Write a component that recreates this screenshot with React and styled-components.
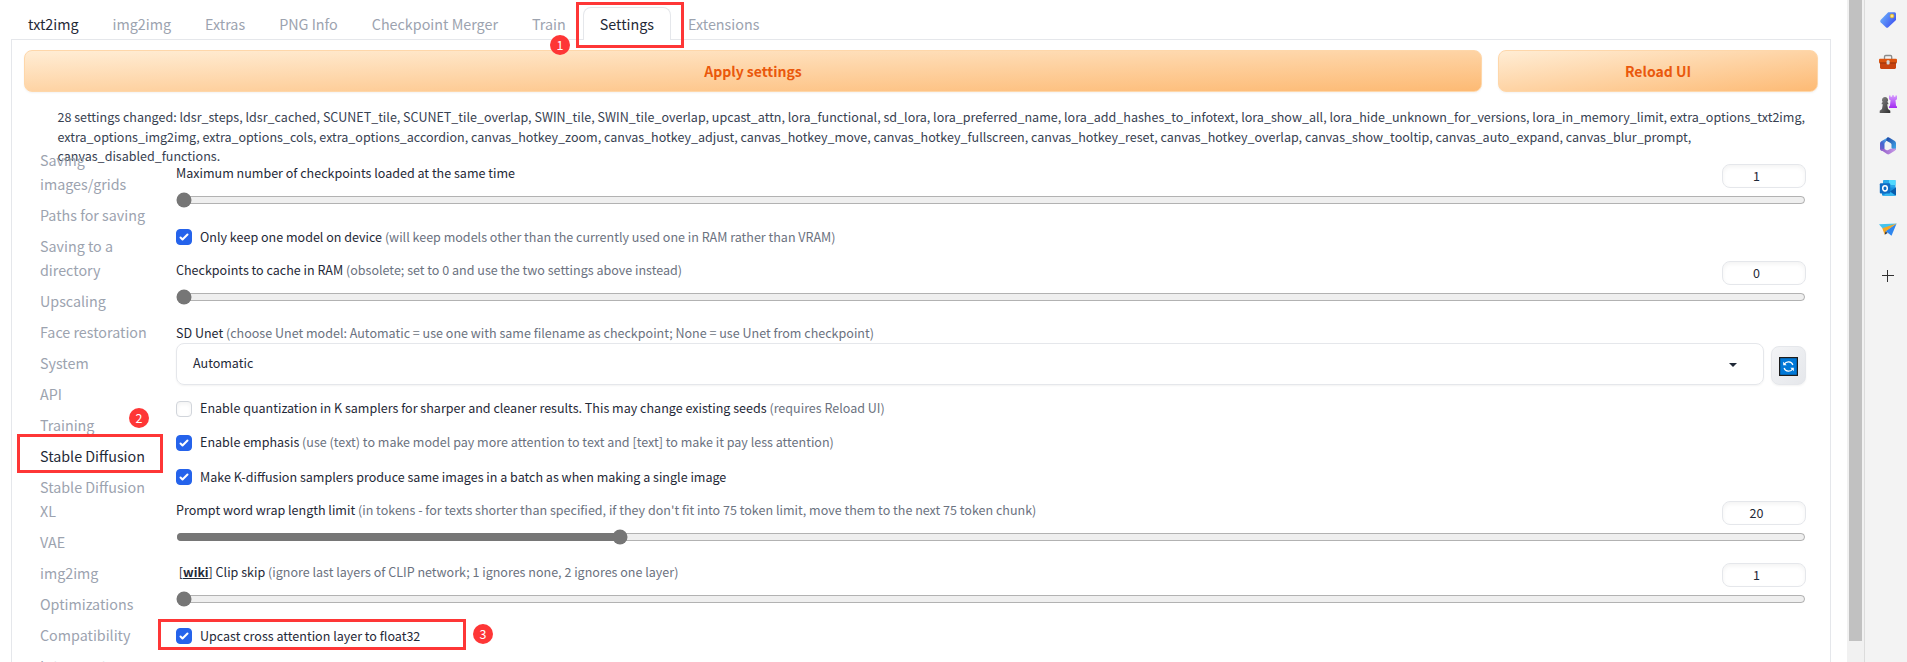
import React from "react";
import styled, { createGlobalStyle, css } from "styled-components";

const GlobalStyle = createGlobalStyle`
  * { box-sizing: border-box; }
  body {
    margin: 0;
    background: #fff;
    color: #1f2937;
    font-family: "Noto Sans CJK SC", "Noto Sans", sans-serif;
    overflow: hidden;
  }
`;

const Page = styled.div`
  position: relative;
  display: flex;
  height: 662px;
  width: 1907px;
  overflow: hidden;
`;

const Content = styled.main`
  flex: 1;
  padding: 7px 16px 0 11px;
  overflow: hidden;
`;

const TabBar = styled.nav`
  display: flex;
  height: 33px;
  margin-bottom: -1px;
  position: relative;
`;

const Tab = styled.div`
  height: 33px;
  padding: 4px 16px 0;
  border: 1px solid transparent;
  border-bottom: 0;
  border-radius: 8px 8px 0 0;
  font-size: 14.33px;
  line-height: 24px;
  white-space: nowrap;
  color: ${(p) => (p.$dark ? "#1f2937" : "#9ca3af")};
  ${(p) =>
    p.$selected &&
    css`
      background: #fff;
      border-color: #e5e7eb;
    `}
`;

const Panel = styled.section`
  height: 700px;
  padding: 10px 12px 0;
  border: 1px solid #e5e7eb;
`;

const Actions = styled.div`
  display: grid;
  grid-template-columns: 1fr 320px;
  gap: 16px;
`;

const PrimaryButton = styled.button`
  height: 42px;
  padding: 0 0 1px;
  border: 1px solid #fed7aa;
  border-radius: 8px;
  background: linear-gradient(to bottom right, #ffedd5, #fdba74);
  box-shadow: 0 1px 2px rgba(0, 0, 0, 0.05);
  color: #ea580c;
  font: 600 14px/24px "Noto Sans CJK SC", sans-serif;
`;

const Changes = styled.div`
  height: 41px;
  margin: 15px 0 0 33.5px;
  font-size: 12.54px;
  line-height: 19.5px;
  color: #374151;
  white-space: nowrap;
`;

const Columns = styled.div`
  display: grid;
  grid-template-columns: 152px 1630px;
`;

const SectionNav = styled.nav`
  display: flex;
  flex-direction: column;
  gap: 7px;
  width: 130px;
  padding-left: 16px;
`;

const SectionLink = styled.div`
  font-size: 14.3px;
  line-height: 24px;
  color: ${(p) => (p.$active ? "#1f2937" : "#9ca3af")};
`;

const Options = styled.div`
  padding-top: 16px;
  font-size: 12.54px;
`;

const Muted = styled.span`
  color: #6b7280;
`;

const SliderBlock = styled.div`
  margin-top: ${(p) => p.$gap || 0}px;
`;

const SliderHead = styled.div`
  display: flex;
  justify-content: space-between;
  height: 24px;
  line-height: 18px;
  white-space: pre;
`;

const NumberBox = styled.div`
  width: 84px;
  height: 24px;
  padding-right: 15px;
  border: 1px solid #e5e7eb;
  border-radius: 8px;
  box-shadow: inset 0 2px 4px rgba(0, 0, 0, 0.05);
  text-align: center;
  line-height: 21px;
`;

const Range = styled.input`
  display: block;
  width: 1630px;
  height: 16px;
  margin: 4px 0 0;
  accent-color: #767676;
`;

const CheckRow = styled.label`
  display: flex;
  align-items: center;
  gap: 8px;
  height: 16px;
  margin-top: ${(p) => p.$gap}px;
  line-height: 16px;
  white-space: nowrap;
`;

const CheckText = styled.span`
  margin-bottom: ${(p) => (p.$raised ? 2 : 0)}px;
`;

const CheckBox = styled.span`
  display: flex;
  width: 16px;
  height: 16px;
  border: 1px solid ${(p) => (p.$on ? "#2563eb" : "#d1d5db")};
  border-radius: 4px;
  background: ${(p) => (p.$on ? "#2563eb" : "#fff")};
  box-shadow: ${(p) => (p.$on ? "none" : "inset 0 2px 4px rgba(0,0,0,.05)")};
  svg { margin: -1px; }
`;

const SelectLabel = styled.div`
  margin-top: 18px;
  height: 20px;
  line-height: 20px;
`;

const SelectRow = styled.div`
  display: flex;
  align-items: flex-end;
  gap: 7px;
  height: 42px;
`;

const Select = styled.div`
  display: flex;
  align-items: center;
  justify-content: space-between;
  width: 1588px;
  height: 42px;
  padding: 0 26px 4px 16px;
  border: 1px solid #e5e7eb;
  border-radius: 8px;
  box-shadow: 0 1px 2px rgba(0, 0, 0, 0.05);
  svg { margin-top: 5px; }
`;

const IconButton = styled.button`
  display: flex;
  align-items: center;
  justify-content: center;
  width: 35px;
  height: 39px;
  padding: 1px 0 0;
  border: 1px solid #e5e7eb;
  border-radius: 8px;
  background: linear-gradient(to bottom right, #f3f4f6, #e5e7eb);
  box-shadow: 0 1px 2px rgba(0, 0, 0, 0.05);
`;

const WikiLink = styled.a`
  font-weight: 600;
  font-size: 12.3px;
  text-decoration: underline;
`;

const ScrollTrack = styled.div`
  width: 17px;
  padding: 0 2px;
  background: #f1f1f1;
`;

const ScrollThumb = styled.div`
  height: 641px;
  background: #c1c1c1;
`;

const EdgeBar = styled.aside`
  display: flex;
  flex-direction: column;
  align-items: center;
  gap: 22px;
  width: 43px;
  padding: 10px 0 0 4px;
  border-left: 1px solid #dcdcdc;
  background: #f3f3f3;
  svg:last-child { margin-top: 3px; }
`;

const Highlight = styled.div`
  position: absolute;
  left: ${(p) => p.$x}px;
  top: ${(p) => p.$y}px;
  width: ${(p) => p.$w}px;
  height: ${(p) => p.$h}px;
  border: 3px solid #fe3636;
`;

const Step = styled.div`
  position: absolute;
  left: ${(p) => p.$x}px;
  top: ${(p) => p.$y}px;
  width: 20px;
  height: 20px;
  border-radius: 50%;
  background: #fe3636;
  color: #fff;
  font-size: 12.5px;
  line-height: 19px;
  text-align: center;
`;

const tabs = ["txt2img", "img2img", "Extras", "PNG Info", "Checkpoint Merger", "Train", "Settings", "Extensions"];

const sections = [
  "Saving images/grids", "Paths for saving", "Saving to a directory", "Upscaling",
  "Face restoration", "System", "API", "Training", "Stable Diffusion",
  "Stable Diffusion XL", "VAE", "img2img", "Optimizations", "Compatibility",
  "Interrogate",
];

function Slider({ label, hint, value, min = 0, max = 10, gap }) {
  return (
    <SliderBlock $gap={gap}>
      <SliderHead>
        <span>{label}{hint && <Muted> {hint}</Muted>}</span>
        <NumberBox>{value}</NumberBox>
      </SliderHead>
      <Range type="range" min={min} max={max} defaultValue={value} />
    </SliderBlock>
  );
}

function Check({ on, raised, label, hint, gap }) {
  return (
    <CheckRow $gap={gap}>
      <CheckBox $on={on}>
        {on && (
          <svg width="16" height="16" viewBox="0 0 16 16" fill="#fff">
            <path d="M12.207 4.793a1 1 0 010 1.414l-5 5a1 1 0 01-1.414 0l-2-2a1 1 0 011.414-1.414L6.5 9.086l4.293-4.293a1 1 0 011.414 0z" />
          </svg>
        )}
      </CheckBox>
      <CheckText $raised={raised}>{label}{hint && <Muted> {hint}</Muted>}</CheckText>
    </CheckRow>
  );
}

const TagIcon = () => (
  <svg width="20" height="20" viewBox="0 0 20 20">
    <defs>
      <linearGradient id="tag" x1="0" y1="0.2" x2="1" y2="0.8">
        <stop offset="0" stopColor="#6cb2fb" /><stop offset="1" stopColor="#3a4cf0" />
      </linearGradient>
    </defs>
    <path d="M10.2 2.2h6.3q1.5 0 1.5 1.5v6.2L10.3 17.3q-1.2 1.1-2.4 0L2.6 12.2q-1-1.1 0-2.3z" fill="url(#tag)" />
    <circle cx="14" cy="6" r="2" fill="#ffd84a" stroke="#d8a92b" strokeWidth="0.6" />
    <circle cx="14" cy="6" r="0.8" fill="#fff4c4" />
  </svg>
);

const ToolboxIcon = () => (
  <svg width="20" height="20" viewBox="0 0 20 20">
    <path d="M6.5 7V4.700q0-1.200 1.200-1.200h4.800q1.200 0 1.200 1.200V7" fill="none" stroke="#8b8b8b" strokeWidth="1.3" />
    <path d="M2 10h16v5.600q0 1.300-1.300 1.300H3.300Q2 16.900 2 15.600z" fill="#c8430f" />
    <rect x="1" y="6.800" width="18" height="4.100" rx="1" fill="#dc540f" />
    <rect x="1.500" y="10.500" width="17" height="0.900" fill="#8c2d08" />
    <rect x="8.600" y="8.300" width="3" height="4.200" rx="0.900" fill="#d6d6d6" />
  </svg>
);

const ChessIcon = () => (
  <svg width="20" height="20" viewBox="0 0 20 20">
    <defs>
      <linearGradient id="rook" x1="0" y1="0" x2="0" y2="1">
        <stop offset="0" stopColor="#d59bff" /><stop offset="1" stopColor="#a22bf0" />
      </linearGradient>
      <linearGradient id="pawn" x1="0" y1="0" x2="1" y2="1">
        <stop offset="0" stopColor="#8a8a8a" /><stop offset="1" stopColor="#2f2f2f" />
      </linearGradient>
    </defs>
    <path d="M11 1.500h1.500v1.200h1.600V1.200h1.800v1.500h1.500V1.500H19v3.800l-1.500 1L18 11.500l1 1.200v1.300h-8v-1.300l1-1.200.500-5.200-1.500-1z" fill="url(#rook)" />
    <path d="M7 3a3 3 0 0 1 2.300 5l1 1v1.300H9.200l.8 4.700 2.300 1.700v2.300H1.700v-2.300L4 15l.8-4.700H3.700V9l1-1A3 3 0 0 1 7 3z" fill="url(#pawn)" />
  </svg>
);

const HexIcon = () => (
  <svg width="20" height="20" viewBox="0 0 20 20">
    <defs>
      <linearGradient id="hexA" x1="0.7" y1="0" x2="0" y2="1">
        <stop offset="0" stopColor="#4fb9ee" /><stop offset="0.5" stopColor="#4465cf" /><stop offset="1" stopColor="#8658cd" />
      </linearGradient>
      <linearGradient id="hexB" x1="0" y1="0" x2="1" y2="1">
        <stop offset="0" stopColor="#1f3f9f" /><stop offset="1" stopColor="#41b0f0" />
      </linearGradient>
      <linearGradient id="hexC" x1="0" y1="0" x2="1" y2="0">
        <stop offset="0" stopColor="#8e5ac8" /><stop offset="1" stopColor="#c99be6" />
      </linearGradient>
    </defs>
    <path d="M10.500 1 3.300 5.200Q2 6 2 7.500v5.200q0 1.300 1.300 2l3.200.3V8q0-1.300 1.200-2z" fill="url(#hexA)" />
    <path d="M9 1.800q1.200-.900 2.500 0l5.300 3.200Q18 5.800 18 7.300v5.200q0 1-1 1.800l-3.500-2V8.600q0-1-1-1.600L8 4.500z" fill="url(#hexB)" />
    <path d="M2.300 13.500 9 18q1.200.8 2.500 0l5.300-3.200q1-.800 1.200-2.300l-5.500.3-2.300 1.300q-1 .4-2 0l-1.700-1.100z" fill="url(#hexC)" />
    <circle cx="10" cy="10" r="2.700" fill="#f3f3f3" />
  </svg>
);

const OutlookIcon = () => (
  <svg width="20" height="20" viewBox="0 0 20 20">
    <rect x="5" y="2" width="12.500" height="9" rx="0.800" fill="#28a8ea" />
    <rect x="11" y="2" width="6.500" height="5" fill="#50d9ff" />
    <path d="M4 9.500h14v7.200q0 1.100-1.100 1.100H5.100Q4 17.800 4 16.700z" fill="#1490df" />
    <path d="M18 9.500v8l-6-4z" fill="#0a5cab" />
    <path d="M5 17.800h12.500L11 13z" fill="#35b8f1" />
    <rect x="1.800" y="5.200" width="10.400" height="10.200" rx="1" fill="#0f6cc4" />
    <ellipse cx="7" cy="10.300" rx="2.300" ry="2.600" fill="none" stroke="#fff" strokeWidth="1.500" />
  </svg>
);

const PlaneIcon = () => (
  <svg width="20" height="20" viewBox="0 0 20 20">
    <path d="M1 4.300 18.600 3.500 6 10z" fill="#44c3ee" />
    <path d="M18.600 3.500 13.500 15.800 7.500 11z" fill="#2f86ee" />
    <path d="M4.300 8.300 18.600 3.500 7.500 11.500 6.700 14.800z" fill="#f5a623" />
    <path d="M7.500 11.300 9.600 13 6.700 14.800z" fill="#31343d" />
  </svg>
);

const PlusIcon = () => (
  <svg width="20" height="20" viewBox="0 0 20 20" shapeRendering="crispEdges">
    <path d="M4 10.500h12M9.500 4.500v12" stroke="#303030" strokeWidth="1" fill="none" />
  </svg>
);

const RefreshIcon = () => (
  <svg width="19" height="19" viewBox="0 0 19 19">
    <rect x="0.600" y="0.600" width="17.800" height="17.800" fill="#0078d7" stroke="#1c1c1c" strokeWidth="1.200" />
    <path d="M5.300 7.300A4.700 4.700 0 0 1 13.900 8M13.700 11.700A4.700 4.700 0 0 1 5.100 11" fill="none" stroke="#fff" strokeWidth="1.200" />
    <path d="M4.200 4.800v3.500h3.500zM14.800 14.200v-3.500h-3.500z" fill="#fff" />
  </svg>
);

export default function App() {
  return (
    <Page>
      <GlobalStyle />
      <Content>
        <TabBar>
          {tabs.map((t) => (
            <Tab key={t} $selected={t === "Settings"} $dark={t === "Settings" || t === "txt2img"}>{t}</Tab>
          ))}
        </TabBar>
        <Panel>
          <Actions>
            <PrimaryButton>Apply settings</PrimaryButton>
            <PrimaryButton>Reload UI</PrimaryButton>
          </Actions>
          <Changes>
            28 settings changed: ldsr_steps, ldsr_cached, SCUNET_tile, SCUNET_tile_overlap, SWIN_tile, SWIN_tile_overlap, upcast_attn, lora_functional, sd_lora, lora_preferred_name, lora_add_hashes_to_infotext, lora_show_all, lora_hide_unknown_for_versions, lora_in_memory_limit, extra_options_txt2img,
            <br />
            extra_options_img2img, extra_options_cols, extra_options_accordion, canvas_hotkey_zoom, canvas_hotkey_adjust, canvas_hotkey_move, canvas_hotkey_fullscreen, canvas_hotkey_reset, canvas_hotkey_overlap, canvas_show_tooltip, canvas_auto_expand, canvas_blur_prompt,
            <br />
            canvas_disabled_functions.
          </Changes>
          <Columns>
            <SectionNav>
              {sections.map((s) => (
                <SectionLink key={s} $active={s === "Stable Diffusion"}>{s}</SectionLink>
              ))}
            </SectionNav>
            <Options>
              <Slider label="Maximum number of checkpoints loaded at the same time" value={1} min={1} />
              <Check on gap={21} label="Only keep one model on device" hint="(will keep models other than the currently used one in RAM rather than VRAM)" />
              <Slider gap={16} label="Checkpoints to cache in RAM" hint="(obsolete; set to 0 and use the two settings above instead)" value={0} />
              <SelectLabel>
                SD Unet <Muted>(choose Unet model: Automatic = use one with same filename as checkpoint; None = use Unet from checkpoint)</Muted>
              </SelectLabel>
              <SelectRow>
                <Select>
                  Automatic
                  <svg width="8" height="4" viewBox="0 0 8 4"><path d="M0 0h8L4 4z" fill="#1f2937" /></svg>
                </Select>
                <IconButton aria-label="Refresh"><RefreshIcon /></IconButton>
              </SelectRow>
              <Check raised gap={16} label="Enable quantization in K samplers for sharper and cleaner results. This may change existing seeds" hint="(requires Reload UI)" />
              <Check on raised gap={18} label="Enable emphasis" hint="(use (text) to make model pay more attention to text and [text] to make it pay less attention)" />
              <Check on gap={18} label="Make K-diffusion samplers produce same images in a batch as when making a single image" />
              <Slider gap={16} label="Prompt word wrap length limit" hint="(in tokens - for texts shorter than specified, if they don't fit into 75 token limit, move them to the next 75 token chunk)" value={20} max={74} />
              <Slider gap={18} label={<> [<WikiLink>wiki</WikiLink>] Clip skip</>} hint="(ignore last layers of CLIP network; 1 ignores none, 2 ignores one layer)" value={1} min={1} max={12} />
              <Check on gap={21} label="Upcast cross attention layer to float32" />
            </Options>
          </Columns>
        </Panel>
      </Content>
      <ScrollTrack><ScrollThumb /></ScrollTrack>
      <EdgeBar>
        <TagIcon />
        <ToolboxIcon />
        <ChessIcon />
        <HexIcon />
        <OutlookIcon />
        <PlaneIcon />
        <PlusIcon />
      </EdgeBar>
      <Highlight $x={576} $y={2} $w={108} $h={46} />
      <Highlight $x={17} $y={434} $w={146} $h={39} />
      <Highlight $x={158} $y={619} $w={308} $h={31} />
      <Step $x={550} $y={35}>1</Step>
      <Step $x={129} $y={408}>2</Step>
      <Step $x={473} $y={624}>3</Step>
    </Page>
  );
}
